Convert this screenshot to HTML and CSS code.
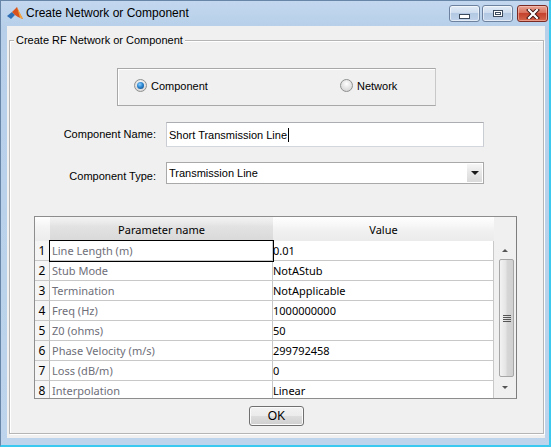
FILE: index.html
```html
<!DOCTYPE html>
<html>
<head>
<meta charset="utf-8">
<link rel="stylesheet" href="styles.css">
</head>
<body>
<div class="window">
  <div class="titlebar">
    <svg class="appicon" width="16" height="16" viewBox="0 0 16 16">
      <polygon points="0,10 5,6 8,9 4,13" fill="#2f6fb5"/>
      <polygon points="5,6 10,1 12,6 16,13 11,11 8,9" fill="#d9531e"/>
      <polygon points="10,1 12,5 14,9 16,13 13,12" fill="#f2a33a"/>
    </svg>
    <span class="title">Create Network or Component</span>
    <div class="winbtns">
      <div class="wbtn"><span class="g-min"></span></div>
      <div class="wbtn"><span class="g-max"></span></div>
      <div class="wbtn close">
        <svg width="14" height="10" viewBox="0 0 14 10">
          <path d="M3 1 L11 9 M11 1 L3 9" stroke="#3a1010" stroke-width="4" stroke-linecap="square"/>
          <path d="M3 1 L11 9 M11 1 L3 9" stroke="#ffffff" stroke-width="2.2" stroke-linecap="square"/>
        </svg>
      </div>
    </div>
  </div>
  <div class="client">
    <div class="group">
      <span class="legend">Create RF Network or Component</span>
      <div class="radiobox">
        <div class="radio first"><span class="dot on"></span>Component</div>
        <div class="radio"><span class="dot"></span>Network</div>
      </div>
      <div class="row">
        <span class="lbl">Component Name:</span>
        <div class="field">Short Transmission Line<span class="caret"></span></div>
      </div>
      <div class="row row-type">
        <span class="lbl lbl-low">Component Type:</span>
        <div class="select"><span class="sel-text">Transmission Line</span><span class="sel-btn"><span class="tri-down"></span></span></div>
      </div>
      <div class="table">
        <div class="grid">
          <div class="hcell hnum"></div>
          <div class="hcell hname">Parameter name</div>
          <div class="hcell hval">Value</div>

          <div class="num">1</div><div class="name focus">Line Length (m)</div><div class="val">0.01</div>
          <div class="num">2</div><div class="name">Stub Mode</div><div class="val">NotAStub</div>
          <div class="num">3</div><div class="name">Termination</div><div class="val">NotApplicable</div>
          <div class="num">4</div><div class="name">Freq (Hz)</div><div class="val">1000000000</div>
          <div class="num">5</div><div class="name">Z0 (ohms)</div><div class="val">50</div>
          <div class="num">6</div><div class="name">Phase Velocity (m/s)</div><div class="val">299792458</div>
          <div class="num">7</div><div class="name">Loss (dB/m)</div><div class="val">0</div>
          <div class="num">8</div><div class="name">Interpolation</div><div class="val">Linear</div>
        </div>
        <div class="vscroll">
          <div class="vs-head"></div>
          <div class="vs-up"><span class="tri-up"></span></div>
          <div class="vs-thumb"><span class="grip"></span></div>
          <div class="vs-down"><span class="tri-down small"></span></div>
        </div>
      </div>
      <div class="okbtn">OK</div>
    </div>
  </div>
</div>
</body>
</html>
```
FILE: styles.css
```css
body {
  margin: 0;
  background: #ffffff;
}

.window {
  width: 551px;
  height: 447px;
  box-sizing: border-box;
  display: flex;
  flex-direction: column;
  background: linear-gradient(#c3d8ef, #b7cfe9 26px, #bdd4ec);
  border-style: solid;
  border-width: 1px 2px 2px 1px;
  border-color: #6886a8 #3cc9ef #3cc9ef #6886a8;
  font-family: "Liberation Sans", Arial, sans-serif;
  font-size: 11px;
  color: #000;
}

/* title bar */
.titlebar {
  height: 25px;
  flex: none;
  display: flex;
  align-items: flex-start;
  padding-right: 1px;
}
.appicon {
  margin: 5px 0 0 6px;
  flex: none;
}
.title {
  margin: 5px 0 0 3px;
  font-size: 12px;
  line-height: 15px;
  color: #000;
  flex: 1;
}
.winbtns {
  display: flex;
  gap: 2px;
  margin-top: 4px;
}
.wbtn {
  width: 31px;
  height: 17px;
  box-sizing: border-box;
  border: 1px solid #6d829e;
  border-radius: 3px;
  background: linear-gradient(#e3ecf7 0%, #cddcee 45%, #b3c8e2 50%, #bfd2ea 100%);
  box-shadow: inset 0 0 0 1px rgba(255,255,255,0.55);
  display: flex;
  align-items: center;
  justify-content: center;
}
.wbtn.close {
  width: 31px;
  margin-left: 2px;
  border-color: #7a2a22;
  background: linear-gradient(#e8a595 0%, #d8705c 45%, #c4422e 50%, #d4654b 100%);
  box-shadow: inset 0 0 0 1px rgba(255,210,200,0.5);
}
.g-min {
  width: 9px;
  height: 3px;
  margin-top: 5px;
  background: #fff;
  border: 1px solid #3c4a5e;
}
.g-max {
  width: 8px;
  height: 5px;
  border: 1px solid #3c4a5e;
  background: #fff;
  box-shadow: inset 0 0 0 1px #fff, inset 0 0 0 2px #3c4a5e;
}

/* client */
.client {
  flex: 1;
  margin: 0 4px 7px 6px;
  background: #f0f0f0;
  display: flex;
  flex-direction: column;
}
.group {
  flex: 1;
  position: relative;
  margin: 14px 1px 4px 2px;
  border: 1px solid #b5b5b5;
  box-shadow: 1px 1px 0 #ffffff, inset 1px 1px 0 #ffffff;
  display: flex;
  flex-direction: column;
  align-items: flex-start;
}
.legend {
  position: absolute;
  top: -8px;
  left: 4px;
  padding: 0 2px;
  background: #f0f0f0;
  line-height: 14px;
}

/* radio box */
.radiobox {
  margin: 27px 0 0 107px;
  width: 319px;
  height: 38px;
  box-sizing: border-box;
  border: 1px solid #a8a8a8;
  border-right-color: #c8c8c8;
  box-shadow: inset 1px 1px 0 #ffffff;
  display: flex;
  align-items: center;
  padding: 0 0 3px 16px;
}
.radio {
  display: flex;
  align-items: center;
  line-height: 14px;
}
.radio.first {
  width: 206px;
}
.dot {
  width: 13px;
  height: 13px;
  box-sizing: border-box;
  border-radius: 50%;
  border: 1px solid #8e8f8f;
  background: radial-gradient(circle at 50% 35%, #ffffff 0, #e6e6e6 45%, #cfcfcf 100%);
  margin-right: 4px;
  display: flex;
  align-items: center;
  justify-content: center;
}
.dot.on::after {
  content: "";
  width: 7px;
  height: 7px;
  border-radius: 50%;
  background: radial-gradient(circle at 40% 35%, #8fd0ff 0, #2a86d1 45%, #0b3f78 100%);
}

/* form rows */
.row {
  display: flex;
  align-items: center;
  margin-top: 16px;
}
.row-type {
  margin-top: 15px;
}
.lbl {
  width: 146px;
  text-align: right;
  margin-right: 10px;
  line-height: 14px;
  padding-bottom: 1px;
}
.lbl-low {
  padding-top: 6px;
  padding-bottom: 0;
}
.field {
  width: 318px;
  height: 25px;
  box-sizing: border-box;
  border: 1px solid #abadb3;
  border-color: #abadb3 #c9ccd2 #d3d6dc #c9ccd2;
  background: #ffffff;
  padding-left: 2px;
  display: flex;
  align-items: center;
  line-height: 14px;
}
.caret {
  width: 1px;
  height: 14px;
  background: #000;
  margin-left: 1px;
}
.select {
  width: 318px;
  height: 22px;
  box-sizing: border-box;
  border: 1px solid #a9a9a9;
  background: #ffffff;
  display: flex;
  align-items: center;
  padding: 0 1px 0 2px;
}
.sel-text {
  flex: 1;
  line-height: 14px;
}
.sel-btn {
  width: 15px;
  height: 18px;
  background: linear-gradient(#f6f6f6, #e6e6e6 50%, #dadada);
  display: flex;
  align-items: center;
  justify-content: center;
}
.tri-down {
  width: 0;
  height: 0;
  border-left: 4px solid transparent;
  border-right: 4px solid transparent;
  border-top: 4px solid #1a1a1a;
}
.tri-down.small {
  border-top-color: #555;
  border-left-width: 3.5px;
  border-right-width: 3.5px;
  border-top-width: 3.5px;
}
.tri-up {
  width: 0;
  height: 0;
  border-left: 3.5px solid transparent;
  border-right: 3.5px solid transparent;
  border-bottom: 3.5px solid #555;
}

/* table */
.table {
  margin: 32px 0 0 24px;
  width: 483px;
  height: 183px;
  box-sizing: border-box;
  border: 1px solid #8d8d8d;
  border-right-color: #7d7d7d;
  display: flex;
  overflow: hidden;
  background: #ffffff;
  font-family: "Noto Sans", "Liberation Sans", sans-serif;
  font-size: 11px;
}
.grid {
  display: grid;
  grid-template-columns: 15px 223px 221px;
  grid-template-rows: 24px repeat(8, 20px);
  overflow: hidden;
}
.hcell {
  display: flex;
  align-items: center;
  justify-content: center;
  color: #000;
}
.hnum {
  background: linear-gradient(#ffffff 0, #f4f4f4 40%, #ececec 100%);
}
.hname {
  background: linear-gradient(#f3f3f3 0, #ececec 20%, #e2e2e2 40%, #d9d9d9 100%);
}
.hval {
  background: linear-gradient(#ffffff 0, #f8f8f8 30%, #f0f0f0 60%, #ebebeb 100%);
}
.num, .name, .val {
  box-sizing: border-box;
  border-bottom: 1px solid #c8c8c8;
  border-right: 1px solid #c8c8c8;
  display: flex;
  align-items: center;
  line-height: 15px;
  white-space: nowrap;
}
.num {
  justify-content: center;
  background: #f5f5f5;
  border-right-color: #bdbdbd;
  font-size: 12px;
}
.name {
  padding-left: 2px;
  color: #6e6e78;
}
.name.focus {
  outline: 1px solid #000;
  outline-offset: 0;
  position: relative;
}
.val {
  padding-left: 0;
  color: #000;
}

/* scrollbar */
.vscroll {
  width: 22px;
  flex: none;
  background: #f0f0f0;
  display: flex;
  flex-direction: column;
  align-items: center;
}
.vs-head {
  height: 24px;
  width: 100%;
  flex: none;
}
.vs-up {
  height: 18px;
  flex: none;
  display: flex;
  align-items: center;
  justify-content: center;
}
.vs-thumb {
  width: 15px;
  height: 118px;
  box-sizing: border-box;
  margin-left: 3px;
  border: 1px solid #a6a6a6;
  border-radius: 2px;
  background: linear-gradient(90deg, #f3f3f3, #e4e4e4 45%, #d6d6d6 55%, #d0d0d0);
  display: flex;
  align-items: center;
  justify-content: center;
  flex: none;
}
.grip {
  width: 8px;
  height: 7px;
  background: repeating-linear-gradient(#555 0, #555 1px, transparent 1px, transparent 2px);
}
.vs-down {
  flex: 1;
  display: flex;
  align-items: center;
  justify-content: center;
}

/* OK */
.okbtn {
  margin: 7px 0 0 239px;
  width: 55px;
  height: 20px;
  box-sizing: border-box;
  border: 1px solid #707070;
  border-radius: 3px;
  background: linear-gradient(#f2f2f2 0, #ebebeb 50%, #dddddd 50%, #cfcfcf 100%);
  box-shadow: inset 0 0 0 1px #fbfbfb;
  display: flex;
  align-items: center;
  justify-content: center;
  font-family: "Liberation Sans", Arial, sans-serif;
  font-size: 12px;
}
```
